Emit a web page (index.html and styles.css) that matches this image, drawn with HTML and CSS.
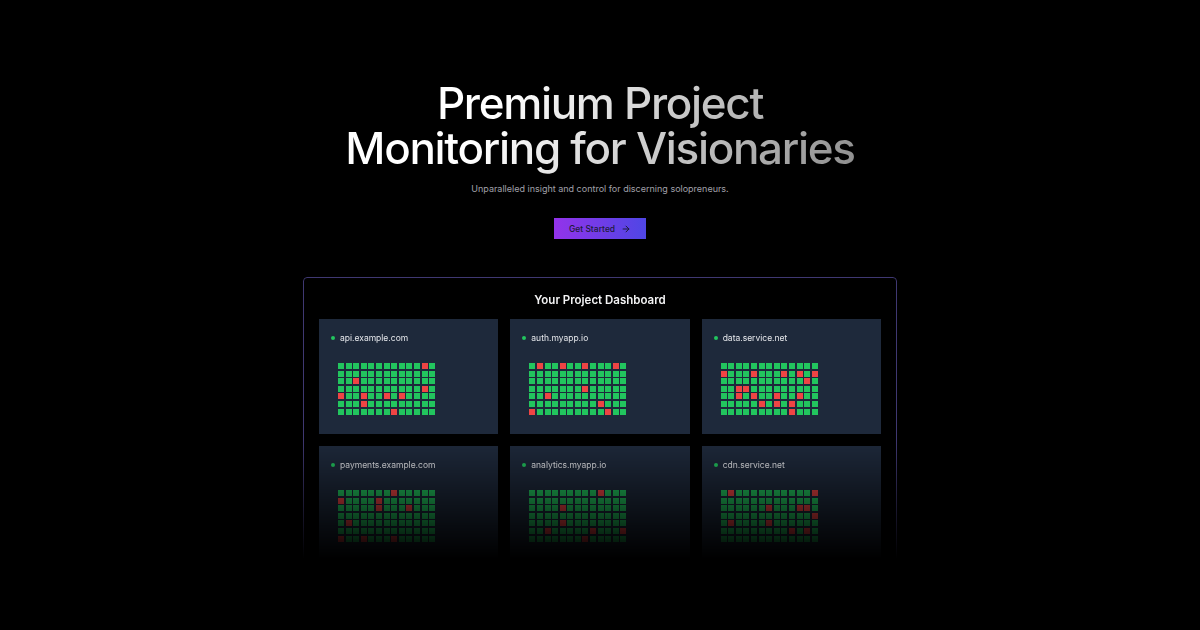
FILE: index.html
```html
<!DOCTYPE html>
<html lang="en">
<head>
<meta charset="utf-8">
<title>Premium Project Monitoring</title>
<link rel="stylesheet" href="styles.css">
</head>
<body>
<main class="page">
  <section class="hero">
    <h1 class="hero-title">Premium Project<br>Monitoring for Visionaries</h1>
    <p class="hero-sub">Unparalleled insight and control for discerning solopreneurs.</p>
    <a class="cta" href="#">Get Started
      <svg class="cta-arrow" viewBox="0 0 24 24" width="10" height="10" fill="none" stroke="currentColor" stroke-width="2.4" stroke-linecap="round" stroke-linejoin="round"><path d="M5 12h14"/><path d="M12 5l7 7-7 7"/></svg>
    </a>
  </section>
  <section class="dash">
    <h2 class="dash-title">Your Project Dashboard</h2>
    <div class="cards" id="cards"></div>
  </section>
</main>
<script src="app.js"></script>
</body>
</html>
```
FILE: app.js
```js
const projects = [
  { name: "api.example.com", red: [[0,11],[2,2],[3,11],[4,0],[4,3],[4,6],[4,8],[5,3],[6,7]] },
  { name: "auth.myapp.io", red: [[0,1],[0,4],[0,7],[0,11],[3,7],[4,2],[5,9],[6,0],[6,10]] },
  { name: "data.service.net", red: [[1,0],[1,4],[1,8],[1,10],[1,12],[2,11],[3,2],[3,3],[4,2],[4,4],[4,7],[4,10],[5,5],[5,7],[5,9],[6,9]] },
  { name: "payments.example.com", red: [[0,7],[1,0],[1,5],[2,5],[2,9],[4,1],[6,0],[6,3],[6,7]] },
  { name: "analytics.myapp.io", red: [[0,9],[2,4],[4,4],[5,2],[5,8],[5,12],[6,7]] },
  { name: "cdn.service.net", red: [[0,1],[0,12],[2,6],[2,10],[2,11],[3,12],[4,1],[4,6],[5,9],[5,11]] }
];
const wrap = document.getElementById("cards");
projects.forEach(p => {
  const card = document.createElement("div");
  card.className = "card";
  const head = document.createElement("div");
  head.className = "card-head";
  head.innerHTML = '<span class="dot"></span><span class="card-name"></span>';
  head.querySelector(".card-name").textContent = p.name;
  card.appendChild(head);
  const grid = document.createElement("div");
  grid.className = "cells";
  const set = new Set(p.red.map(([r, c]) => r * 13 + c));
  for (let i = 0; i < 91; i++) {
    const c = document.createElement("span");
    c.className = set.has(i) ? "cell down" : "cell up";
    grid.appendChild(c);
  }
  card.appendChild(grid);
  wrap.appendChild(card);
});
```
FILE: styles.css
```css
* { box-sizing: border-box; }
html, body { margin: 0; padding: 0; background: #000; }
body {
  font-family: Inter, "Noto Sans", "Liberation Sans", sans-serif;
  color: #fff;
  width: 1200px;
  height: 630px;
  overflow: hidden;
}
.page {
  display: flex;
  flex-direction: column;
  align-items: center;
  padding-top: 81px;
}
.hero {
  display: flex;
  flex-direction: column;
  align-items: center;
  text-align: center;
}
.hero-title {
  margin: 0 0 -10px;
  padding-bottom: 10px;
  font-size: 44px;
  line-height: 45px;
  font-weight: 500;
  letter-spacing: -0.03em;
  background: linear-gradient(120deg, #ffffff 30%, #8c8c8c 100%);
  -webkit-background-clip: text;
  background-clip: text;
  color: transparent;
}
.hero-sub {
  margin: 12px 0 0;
  font-size: 9px;
  line-height: 12px;
  color: #a1a1aa;
}
.cta {
  margin-top: 23px;
  display: inline-flex;
  align-items: center;
  justify-content: center;
  gap: 6px;
  width: 92px;
  height: 21px;
  background: linear-gradient(90deg, #9333ea, #4f46e5);
  color: #1e1b3a;
  font-size: 8.5px;
  font-weight: 500;
  text-decoration: none;
}
.cta-arrow { display: block; }
.dash {
  margin-top: 38px;
  width: 594px;
  border: 1px solid #3f3872;
  border-radius: 4px;
  padding: 14px 15px 15px;
  -webkit-mask-image: linear-gradient(to bottom, #000 54%, transparent 94%);
  mask-image: linear-gradient(to bottom, #000 54%, transparent 94%);
}
.dash-title {
  margin: 0;
  text-align: center;
  font-size: 11.5px;
  line-height: 16px;
  font-weight: 600;
  color: #f4f4f5;
}
.cards {
  margin-top: 11px;
  display: grid;
  grid-template-columns: repeat(3, 1fr);
  gap: 12px;
}
.card {
  background: #1e293b;
  padding: 13px 12px 19px;
  height: 115px;
}
.card-head {
  display: flex;
  align-items: center;
  gap: 5px;
  height: 12px;
}
.dot {
  width: 4px;
  height: 4px;
  border-radius: 50%;
  background: #22c55e;
}
.card-name {
  font-size: 8.5px;
  line-height: 12px;
  color: #e5e7eb;
}
.cells {
  margin: 19px 0 0 7px;
  display: grid;
  grid-template-columns: repeat(13, 6px);
  grid-auto-rows: 6px;
  gap: 1.6px;
}
.cell { display: block; }
.cell.up { background: #22c55e; }
.cell.down { background: #ef4444; }
```
